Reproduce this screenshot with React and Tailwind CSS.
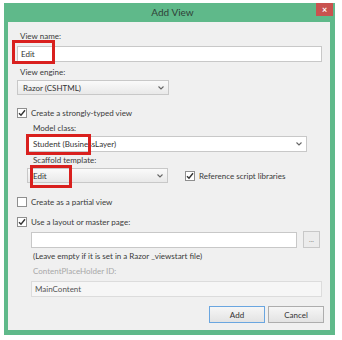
import React from "react";

const font = { fontFamily: 'Lato, "Open Sans", sans-serif' };

// small check mark used by the checkboxes
const Check = () => (
  <svg width="8" height="8" viewBox="0 0 8 8">
    <path d="M1 4.2 L3 6.3 L7 1.2" fill="none" stroke="#333" strokeWidth="1.4" />
  </svg>
);

const CheckBox = ({ checked, label }) => (
  <div className="flex items-center h-[12px]">
    <div className="w-[10px] h-[10px] border border-[#8f8f8f] bg-white flex items-center justify-center">
      {checked && <Check />}
    </div>
    <span className="ml-[4px] text-[8px] leading-[12px] text-[#3a3a3a]">{label}</span>
  </div>
);

const Chevron = () => (
  <svg width="6" height="4" viewBox="0 0 6 4">
    <path d="M0.5 0.5 L3 3 L5.5 0.5" fill="none" stroke="#666" strokeWidth="1.1" />
  </svg>
);

const Select = ({ value, className }) => (
  <div
    className={`flex items-center justify-between border border-[#c8c8c8] bg-gradient-to-b from-[#fafafa] to-[#e9e9e9] pl-[5px] pr-[4px] ${className}`}
  >
    <span className="text-[8px] leading-none text-[#333]">{value}</span>
    <Chevron />
  </div>
);

const Label = ({ children, className = "" }) => (
  <div className={`h-[12px] text-[8px] leading-[12px] text-[#3a3a3a] ${className}`}>{children}</div>
);

const RedBox = ({ className }) => (
  <div className={`absolute border-[3px] border-[#d9201e] ${className}`} />
);

export default function App() {
  return (
    <div className="relative w-[342px] h-[340px] bg-white" style={font}>
      <div className="absolute left-[4px] top-[3px] w-[331px] h-[332px] bg-[#5fb98a] flex flex-col">
        <div className="relative h-[19px] flex items-center justify-center">
          <span className="text-[10px] text-[#2f3f37] ml-[6px]">Add View</span>
          <div className="absolute right-[2px] top-0 w-[17px] h-[13px] bg-[#c9524f] flex items-center justify-center">
            <span className="text-white text-[9px] leading-none font-bold">×</span>
          </div>
        </div>
        <div className="ml-[4px] w-[322px] h-[308px] bg-[#f0f0f0] pt-[8px] px-[9px] flex flex-col">
          <Label className="pl-[3px]">View name:</Label>
          <div className="mt-[4px] w-[305px] h-[16px] border border-[#c8c8c8] bg-white flex items-center pl-[3px]">
            <span className="text-[8px] leading-none text-[#333]">Edit</span>
          </div>
          <Label className="mt-[4px] pl-[3px]">View engine:</Label>
          <Select value="Razor (CSHTML)" className="mt-[2px] w-[152px] h-[15px]" />
          <div className="mt-[12px]">
            <CheckBox checked label="Create a strongly-typed view" />
          </div>
          <Label className="mt-[3px] pl-[16px]">Model class:</Label>
          <div className="mt-[2px] ml-[9px] w-[281px] h-[16px] border border-[#c8c8c8] bg-white flex items-center justify-between pl-[6px] pr-[4px]">
            <span className="text-[8px] leading-none text-[#333]">Student (BusinessLayer)</span>
            <Chevron />
          </div>
          <Label className="mt-[2px] pl-[16px]">Scaffold template:</Label>
          <div className="mt-[2px] ml-[10px] flex items-center">
            <Select value="Edit" className="w-[141px] h-[15px]" />
            <div className="ml-[17px]">
              <CheckBox checked label="Reference script libraries" />
            </div>
          </div>
          <div className="mt-[13px]">
            <CheckBox label="Create as a partial view" />
          </div>
          <div className="mt-[8px]">
            <CheckBox checked label="Use a layout or master page:" />
          </div>
          <div className="mt-[3px] ml-[14px] flex items-center">
            <div className="w-[266px] h-[16px] border border-[#c8c8c8] bg-white" />
            <div className="ml-[6px] w-[17px] h-[17px] border border-[#c8c8c8] bg-[#ececec] flex items-center justify-center">
              <span className="text-[7px] leading-none text-[#888]">...</span>
            </div>
          </div>
          <Label className="mt-[2px] pl-[16px]">(Leave empty if it is set in a Razor _viewstart file)</Label>
          <Label className="mt-[3px] pl-[16px] text-[#a8a8a8]">ContentPlaceHolder ID:</Label>
          <div className="mt-[4px] ml-[14px] w-[291px] h-[16px] border border-[#dcdcdc] bg-[#f6f6f6] flex items-center pl-[3px]">
            <span className="text-[8px] leading-none text-[#555]">MainContent</span>
          </div>
          <div className="mt-[9px] -mr-[3px] flex justify-end gap-[3px]">
            <div className="w-[56px] h-[17px] border border-[#6aa6e0] bg-gradient-to-b from-[#f6f6f6] to-[#e3e3e3] flex items-center justify-center">
              <span className="text-[8px] leading-none text-[#333]">Add</span>
            </div>
            <div className="w-[56px] h-[17px] border border-[#adadad] bg-gradient-to-b from-[#f6f6f6] to-[#e3e3e3] flex items-center justify-center">
              <span className="text-[8px] leading-none text-[#333]">Cancel</span>
            </div>
          </div>
        </div>
      </div>
      <RedBox className="left-[12px] top-[40px] w-[43px] h-[24px]" />
      <RedBox className="left-[26px] top-[134px] w-[65px] h-[21px]" />
      <RedBox className="left-[30px] top-[165px] w-[42px] h-[23px]" />
    </div>
  );
}
